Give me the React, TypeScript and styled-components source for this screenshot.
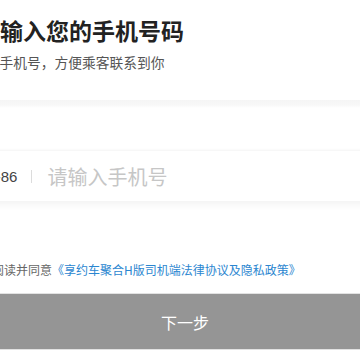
import React from "react";
import styled, { createGlobalStyle } from "styled-components";

const Global = createGlobalStyle`
  html, body { margin: 0; padding: 0; background: #fff; overflow: hidden; }
  body { font-family: "Noto Sans CJK SC", "Noto Sans", sans-serif; }
  * { box-sizing: border-box; }
`;

const Page = styled.div`
  width: 450px;
  margin-left: -40px;
  padding: 14px 17px 0;
  display: flex;
  flex-direction: column;
`;

const Title = styled.h1`
  margin: 0;
  font-size: 23px;
  line-height: 32px;
  font-weight: 700;
  color: #222;
`;

const Subtitle = styled.p`
  margin: 6px 0 0 -5px;
  font-size: 13.75px;
  line-height: 20px;
  color: #555;
`;

const Form = styled.div`
  margin: 28px -17px 0;
  padding: 51px 17px 0;
  background: linear-gradient(to bottom, #f5f5f5 0, #f8f8f8 5px, #fff 8px);
  display: flex;
  flex-direction: column;
`;

const PhoneCard = styled.label`
  height: 50px;
  display: flex;
  align-items: center;
  padding-left: 15px;
  background: #fff;
  box-shadow: 0 3px 8px rgba(0, 0, 0, 0.06), 0 -1px 2px rgba(0, 0, 0, 0.03);
`;

const Prefix = styled.span`
  font-family: "Liberation Sans", "Noto Sans", sans-serif;
  font-size: 15px;
  color: #444;
`;

const Divider = styled.span`
  width: 1px;
  height: 13px;
  margin: 0 15px 0 14px;
  background: #dcdcdc;
`;

const PhoneInput = styled.input`
  flex: 1;
  border: none;
  outline: none;
  padding: 0;
  background: transparent;
  font-family: "Noto Sans CJK SC", sans-serif;
  font-size: 20px;
  color: #333;
  &::placeholder { color: #c6c6c6; }
`;

const Agreement = styled.p`
  margin: 60px 0 0 -25px;
  font-size: 12px;
  line-height: 18px;
  color: #666;
  white-space: nowrap;
  display: flex;
  align-items: center;
`;

const Check = styled.span`
  width: 12px;
  height: 12px;
  border: 1px solid #bbb;
  border-radius: 50%;
  margin-right: 4px;
`;

const Link = styled.a`
  color: #2b86d0;
  text-decoration: none;
`;

const NextButton = styled.button`
  margin-top: 14px;
  height: 57px;
  border: 1px solid #e2e2e2;
  background: #959595;
  color: #fff;
  font-family: "Noto Sans CJK SC", sans-serif;
  font-size: 16px;
  display: flex;
  align-items: center;
  justify-content: center;
`;

export default function App() {
  return (
    <>
      <Global />
      <Page>
        <Title>请输入您的手机号码</Title>
        <Subtitle>输入手机号，方便乘客联系到你</Subtitle>
        <Form>
          <PhoneCard>
            <Prefix>+86</Prefix>
            <Divider />
            <PhoneInput placeholder="请输入手机号" />
          </PhoneCard>
          <Agreement>
            <Check />
            我已阅读并同意<Link>《享约车聚合H版司机端法律协议及隐私政策》</Link>
          </Agreement>
          <NextButton>下一步</NextButton>
        </Form>
      </Page>
    </>
  );
}
